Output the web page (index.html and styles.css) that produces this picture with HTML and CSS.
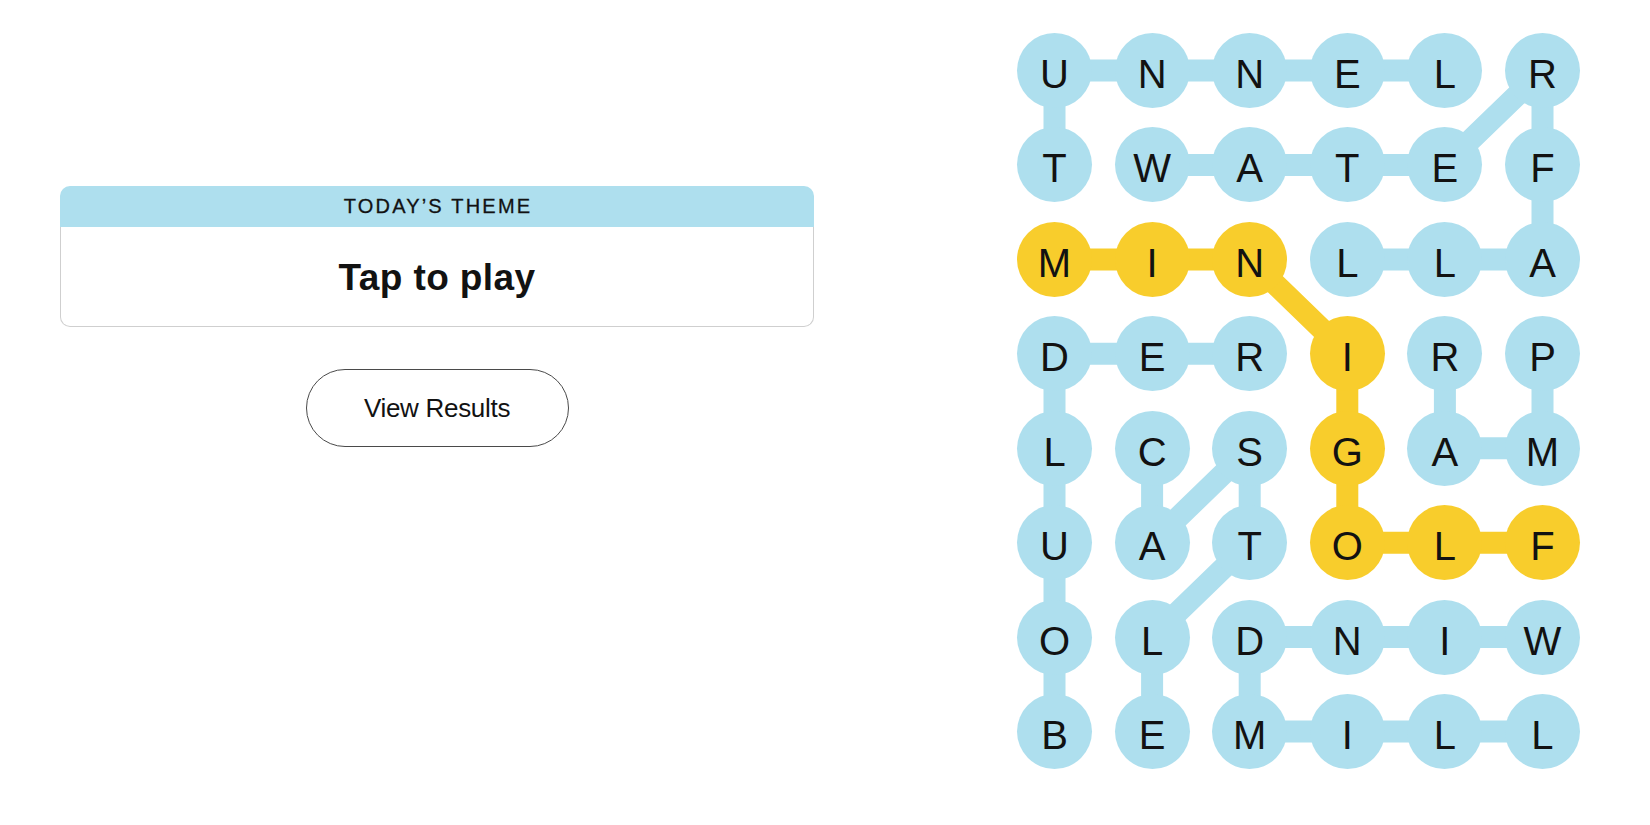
FILE: index.html
```html
<!DOCTYPE html>
<html lang="en">
<head>
    <meta charset="utf-8">
    <title>Strands</title>
    <link rel="stylesheet" href="styles.css">
</head>
<body>

<main class="page">
    <section class="intro">
        <div class="themeCard">
            <div class="themeLabel">TODAY’S THEME</div>
            <div class="themeBody">Tap to play</div>
        </div>
        <button class="resultsBtn" type="button">View Results</button>
    </section>

    <section class="boardWrap">
        <div class="board">
            <!-- connector layer, sits under the letters -->
            <svg class="links" viewBox="0 0 563 737" aria-hidden="true">
                <g class="found">
                    <polyline points="37.5,131.9 37.5,37.5 427.9,37.5"/>
                    <polyline points="135.1,131.9 427.9,131.9 525.5,37.5 525.5,226.4 330.3,226.4"/>
                    <polyline points="37.5,698.5 37.5,320.8 232.7,320.8"/>
                    <polyline points="427.9,320.8 427.9,415.2 525.5,415.2 525.5,320.8"/>
                    <polyline points="135.1,415.2 135.1,509.7 232.7,415.2 232.7,509.7 135.1,604.1 135.1,698.5"/>
                    <polyline points="525.5,604.1 232.7,604.1 232.7,698.5 525.5,698.5"/>
                </g>
                <g class="spangram">
                    <polyline points="37.5,226.4 232.7,226.4 330.3,320.8 330.3,509.7 525.5,509.7"/>
                </g>
            </svg>

            <div class="cell">U</div><div class="cell">N</div><div class="cell">N</div><div class="cell">E</div><div class="cell">L</div><div class="cell">R</div>
            <div class="cell">T</div><div class="cell">W</div><div class="cell">A</div><div class="cell">T</div><div class="cell">E</div><div class="cell">F</div>
            <div class="cell span">M</div><div class="cell span">I</div><div class="cell span">N</div><div class="cell">L</div><div class="cell">L</div><div class="cell">A</div>
            <div class="cell">D</div><div class="cell">E</div><div class="cell">R</div><div class="cell span">I</div><div class="cell">R</div><div class="cell">P</div>
            <div class="cell">L</div><div class="cell">C</div><div class="cell">S</div><div class="cell span">G</div><div class="cell">A</div><div class="cell">M</div>
            <div class="cell">U</div><div class="cell">A</div><div class="cell">T</div><div class="cell span">O</div><div class="cell span">L</div><div class="cell span">F</div>
            <div class="cell">O</div><div class="cell">L</div><div class="cell">D</div><div class="cell">N</div><div class="cell">I</div><div class="cell">W</div>
            <div class="cell">B</div><div class="cell">E</div><div class="cell">M</div><div class="cell">I</div><div class="cell">L</div><div class="cell">L</div>
        </div>
    </section>
</main>

</body>
</html>
```

FILE: styles.css
```css
body {
	margin: 0;
	background: #fff;
	color: #121212;
	font-family: "Liberation Sans", Arial, sans-serif;
}

.page {
	display: flex;
	align-items: flex-start;
}

/* left column */
.intro {
	width: 874px;
	box-sizing: border-box;
	padding: 186px 60px 0 60px;
	display: flex;
	flex-direction: column;
	align-items: center;
}

.themeCard {
	width: 100%;
}

.themeLabel {
	height: 41px;
	display: flex;
	align-items: center;
	justify-content: center;
	background: #aedfee;
	border-radius: 10px 10px 0 0;
	font-size: 20px;
	letter-spacing: 2.2px;
	padding-left: 2px;
	-webkit-text-stroke: 0.3px #121212;
}

.themeBody {
	height: 100px;
	box-sizing: border-box;
	display: flex;
	align-items: center;
	justify-content: center;
	padding-top: 2px;
	border: 1px solid #cfcfcf;
	border-top: none;
	border-radius: 0 0 10px 10px;
	font-size: 37px;
	font-weight: 700;
	letter-spacing: 0.4px;
}

.resultsBtn {
	margin-top: 42px;
	width: 263px;
	height: 78px;
	background: #fff;
	border: 1px solid #4a4a4a;
	border-radius: 40px;
	font-family: inherit;
	font-size: 26px;
	letter-spacing: -0.3px;
	color: #121212;
	cursor: pointer;
}

/* right column: the board */
.boardWrap {
	padding: 33px 0 0 143px;
}

.board {
	position: relative;
	display: grid;
	grid-template-columns: repeat(6, 75px);
	grid-template-rows: repeat(8, 75px);
	column-gap: 22.6px;
	row-gap: 19.43px;
}

.links {
	position: absolute;
	left: 0;
	top: 0;
	width: 563px;
	height: 737px;
}

.links polyline {
	fill: none;
	stroke-width: 22;
	stroke-linejoin: round;
}

.found polyline {
	stroke: #aedfee;
}

.spangram polyline {
	stroke: #f8cd2c;
}

.cell {
	position: relative;
	width: 75px;
	height: 75px;
	box-sizing: border-box;
	padding-top: 8px;
	border-radius: 50%;
	background: #aedfee;
	display: flex;
	align-items: center;
	justify-content: center;
	font-size: 40px;
	color: #121212;
	-webkit-user-select: none;
	user-select: none;
}

.cell.span {
	background: #f8cd2c;
}
```
